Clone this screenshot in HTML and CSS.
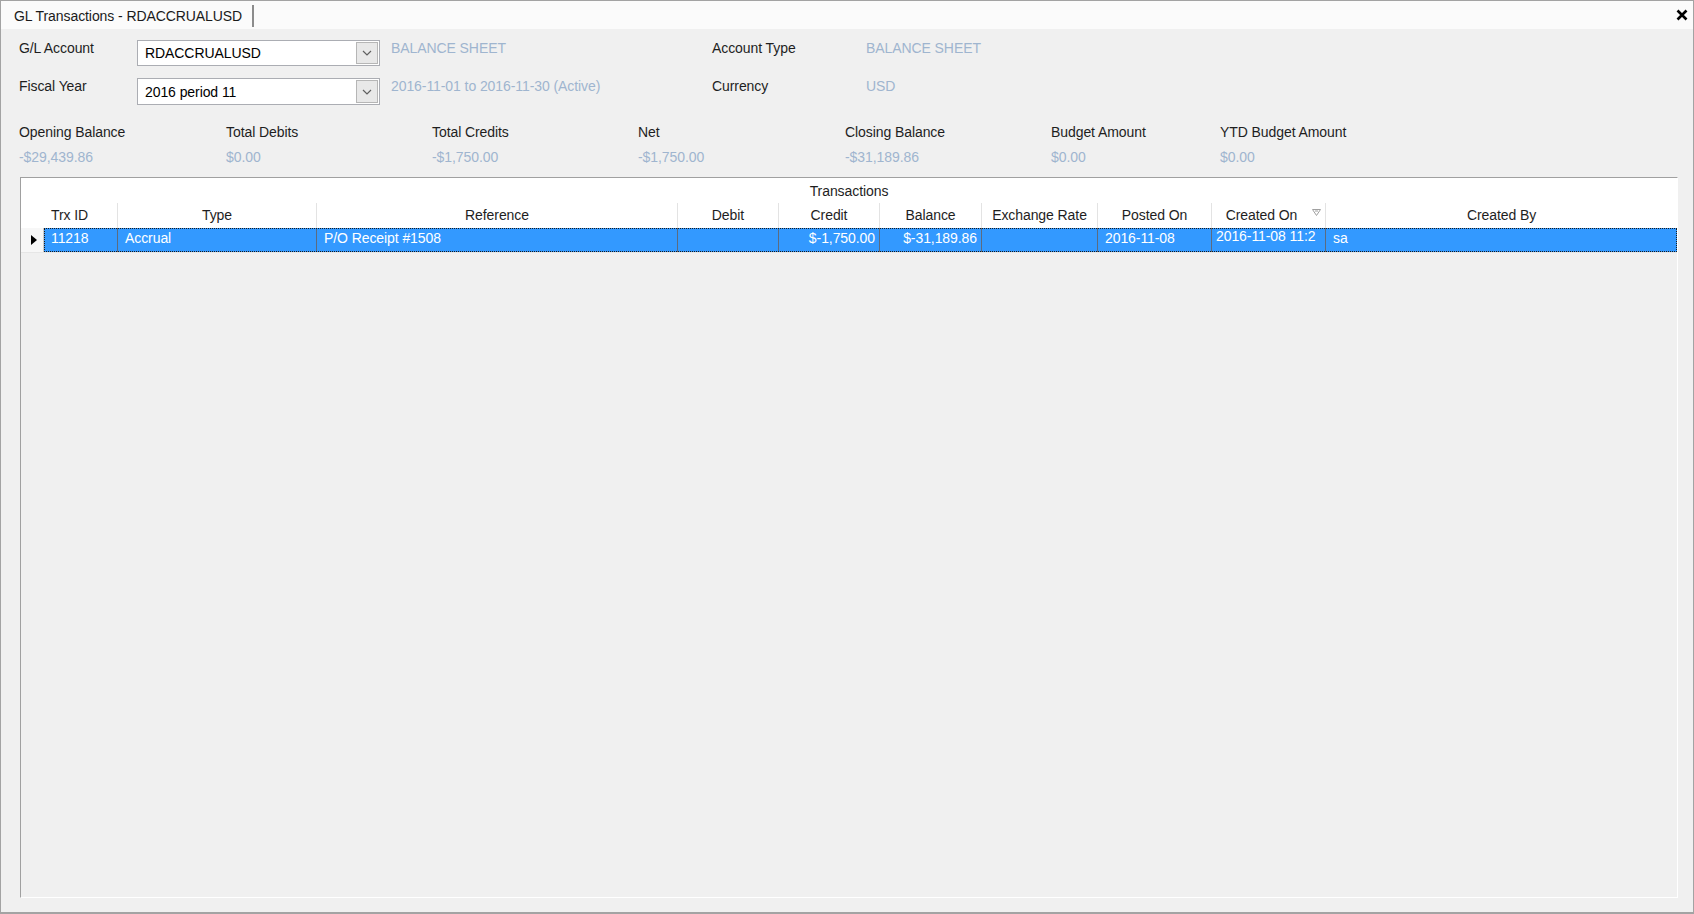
FILE: index.html
```html
<!DOCTYPE html>
<html>
<head>
<meta charset="utf-8">
<title>GL Transactions - RDACCRUALUSD</title>
<link rel="stylesheet" href="styles.css">
</head>
<body>
<div class="window">
  <div class="tabstrip">
    <div class="tab">GL Transactions - RDACCRUALUSD</div>
    <div class="close">
      <svg width="12" height="12" viewBox="0 0 12 12"><path d="M1.5 1.5 L10.5 10.5 M10.5 1.5 L1.5 10.5" stroke="#000" stroke-width="2.6" fill="none"/></svg>
    </div>
  </div>
  <div class="content">
    <div class="params">
      <div class="lbl">G/L Account</div>
      <div class="combo"><span class="combo-text">RDACCRUALUSD</span><span class="dd"><svg width="10" height="6" viewBox="0 0 10 6"><path d="M1 1 L5 5 L9 1" stroke="#606060" stroke-width="1.2" fill="none"/></svg></span></div>
      <div class="info pad">BALANCE SHEET</div>
      <div class="lbl">Account Type</div>
      <div class="info">BALANCE SHEET</div>

      <div class="lbl">Fiscal Year</div>
      <div class="combo"><span class="combo-text">2016 period 11</span><span class="dd"><svg width="10" height="6" viewBox="0 0 10 6"><path d="M1 1 L5 5 L9 1" stroke="#606060" stroke-width="1.2" fill="none"/></svg></span></div>
      <div class="info pad">2016-11-01 to 2016-11-30 (Active)</div>
      <div class="lbl">Currency</div>
      <div class="info">USD</div>
    </div>

    <div class="summary">
      <div class="lbl">Opening Balance</div>
      <div class="lbl">Total Debits</div>
      <div class="lbl">Total Credits</div>
      <div class="lbl">Net</div>
      <div class="lbl">Closing Balance</div>
      <div class="lbl">Budget Amount</div>
      <div class="lbl">YTD Budget Amount</div>
      <div class="info">-$29,439.86</div>
      <div class="info">$0.00</div>
      <div class="info">-$1,750.00</div>
      <div class="info">-$1,750.00</div>
      <div class="info">-$31,189.86</div>
      <div class="info">$0.00</div>
      <div class="info">$0.00</div>
    </div>

    <div class="gridbox">
      <div class="caption">Transactions</div>
      <div class="grow hdr">
        <div class="c c-rh"></div>
        <div class="c c-id left">Trx ID</div>
        <div class="c c-type">Type</div>
        <div class="c c-ref">Reference</div>
        <div class="c c-deb">Debit</div>
        <div class="c c-cred">Credit</div>
        <div class="c c-bal">Balance</div>
        <div class="c c-ex">Exchange Rate</div>
        <div class="c c-post">Posted On</div>
        <div class="c c-cre sortcol">Created On<svg class="sortglyph" width="9" height="7" viewBox="0 0 9 7"><path d="M0.5 0.5 L8.5 0.5 L4.5 6.5 Z" stroke="#a0a0a0" stroke-width="1" fill="none"/><path d="M3 2 L6 2" stroke="#a0a0a0" stroke-width="1"/></svg></div>
        <div class="c c-by">Created By</div>
      </div>
      <div class="grow data">
        <div class="c c-rh"><svg width="6" height="10" viewBox="0 0 6 10"><path d="M0 0 L6 5 L0 10 Z" fill="#000"/></svg></div>
        <div class="sel">
          <div class="c c-id">11218</div>
          <div class="c c-type">Accrual</div>
          <div class="c c-ref">P/O Receipt #1508</div>
          <div class="c c-deb"></div>
          <div class="c c-cred right">$-1,750.00</div>
          <div class="c c-bal right">$-31,189.86</div>
          <div class="c c-ex"></div>
          <div class="c c-post">2016-11-08</div>
          <div class="c c-cre up">2016-11-08 11:2</div>
          <div class="c c-by">sa</div>
        </div>
      </div>
    </div>
  </div>
</div>
</body>
</html>
```

FILE: styles.css
```css
* { box-sizing: border-box; }
html, body { margin: 0; padding: 0; }
body {
  background: #f0f0f0;
  font-family: "Liberation Sans", Arial, sans-serif;
  font-size: 14px;
  line-height: 16px;
  letter-spacing: -0.08px;
  color: #1e1e1e;
}
.window {
  width: 1694px;
  height: 914px;
  border: 1px solid #a3a3a3;
  border-bottom: 2px solid #a3a3a3;
  background: #f0f0f0;
  display: flex;
  flex-direction: column;
}
.tabstrip {
  height: 28px;
  background: #fbfbfb;
  display: flex;
  align-items: center;
  justify-content: space-between;
  flex-shrink: 0;
}
.tab {
  height: 22px;
  margin-top: 2px;
  padding-left: 13px;
  padding-right: 7px;
  width: 253px;
  border-right: 2px solid #8c8c8c;
  display: flex;
  align-items: center;
  color: #1a1a1a;
  white-space: nowrap;
}
.close {
  width: 12px;
  height: 12px;
  margin-right: 5px;
  display: flex;
}
.content {
  flex: 1;
  display: flex;
  flex-direction: column;
  padding: 11px 15px 14px 18px;
}
.params {
  display: grid;
  grid-template-columns: 118px 243px 332px 154px 1fr;
  grid-template-rows: 26px 27px;
  row-gap: 12px;
}
.lbl { color: #1e1e1e; white-space: nowrap; }
.info { color: #9fb5cf; white-space: nowrap; }
.info.pad { padding-left: 11px; }
.combo {
  background: #fff;
  border: 1px solid #abadb3;
  display: flex;
  align-items: center;
  justify-content: space-between;
  padding: 1px 1px 1px 7px;
}
.combo-text { color: #000; }
.dd {
  width: 22px;
  height: 100%;
  background: #e8e8e8;
  border: 1px solid #b6b6b6;
  display: flex;
  align-items: center;
  justify-content: center;
}
.summary {
  margin-top: 19px;
  display: grid;
  grid-template-columns: 207px 206px 206px 207px 206px 169px 1fr;
  row-gap: 9px;
}
.gridbox {
  margin-top: 12px;
  margin-left: 1px;
  flex: 1;
  border-top: 1px solid #a0a0a0;
  border-left: 1px solid #a0a0a0;
  border-right: 1px solid #ffffff;
  border-bottom: 1px solid #ffffff;
  background: #f0f0f0;
}
.caption {
  height: 25px;
  background: #fff;
  text-align: center;
  padding-top: 5px;
  color: #1e1e1e;
}
.grow { display: flex; }
.hdr { height: 25px; background: #fff; }
.hdr .c {
  border-right: 1px solid #e3e3e3;
  text-align: center;
  padding-top: 4px;
  color: #1e1e1e;
}
.hdr .c-rh { border-right: none; }
.hdr .c-by { border-right: none; }
.hdr .left { text-align: left; padding-left: 7px; }
.sortcol { position: relative; padding-right: 14px; }
.sortglyph { position: absolute; right: 4px; top: 6px; }
.c { flex-shrink: 0; white-space: nowrap; overflow: hidden; }
.c-rh { width: 23px; }
.c-id { width: 74px; }
.c-type { width: 199px; }
.c-ref { width: 361px; }
.c-deb { width: 101px; }
.c-cred { width: 101px; }
.c-bal { width: 102px; }
.c-ex { width: 116px; }
.c-post { width: 114px; }
.c-cre { width: 114px; }
.c-by { flex: 1; width: auto; }
.data { height: 25px; border-bottom: 1px solid #e6e6e6; }
.data .c-rh {
  background: #f7f7f7;
  border-right: 1px solid #c8c8c8;
  display: flex;
  align-items: center;
  padding-left: 10px;
}
.sel {
  flex: 1;
  display: flex;
  background: #3399ff;
  outline: 1px dotted #1a1a1a;
  outline-offset: -1px;
}
.sel .c {
  color: #fff;
  padding: 2px 4px 0 7px;
  border-right: 1px solid #5b6b80;
}
.sel .c-by { border-right: none; padding-left: 7px; }
.sel .right { text-align: right; padding-right: 4px; }
.sel .up { padding-top: 0; padding-left: 4px; }
```
